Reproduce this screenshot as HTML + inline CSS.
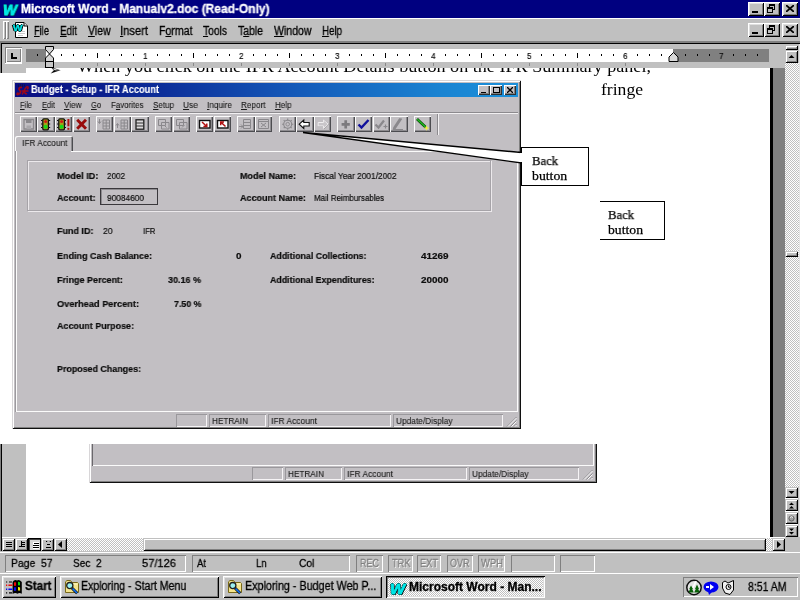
<!DOCTYPE html>
<html lang="en"><head><meta charset="utf-8"><title>Microsoft Word - Manualv2.doc (Read-Only)</title>
<style>
html,body{margin:0;padding:0;background:#c0c0c0;overflow:hidden}
#s{position:relative;width:800px;height:600px;overflow:hidden;background:#c0c0c0}
#s div,#s span,#s svg{position:absolute;display:block}
#s span{white-space:nowrap;transform-origin:0 0;will-change:transform}
#s u{text-decoration:underline;text-underline-offset:1px}
.dith{background-image:repeating-conic-gradient(#fff 0 25%,#c0c0c0 0 50%);background-size:2px 2px}
</style></head><body><div id="s">
<div style="left:0px;top:0px;width:800px;height:18px;background:#000080;"></div>
<span id="t0" style="left:3px;top:2.18px;font:italic bold 15.5px/15.5px 'Liberation Sans',sans-serif;color:#00e8e8;transform:scaleX(0.9562);-webkit-text-stroke:0.3px #00e8e8;-webkit-text-stroke:0.9px #00e8e8;text-shadow:1px 0 0 #003030,0 1px 0 #003030,-1px 0 0 #003030,0 -1px 0 #003030,1px 1px 0 #002020;">W</span>
<span id="t1" style="left:21px;top:2.84px;font:bold 12px/12px 'Liberation Sans',sans-serif;color:#fff;transform:scaleX(0.9974);-webkit-text-stroke:0.3px #fff;">Microsoft Word - Manualv2.doc (Read-Only)</span>
<div style="left:748px;top:2px;width:16px;height:14px;background:#c0c0c0;box-shadow:inset 1px 1px 0 #fff,inset -1px -1px 0 #000,inset 2px 2px 0 #dfdfdf,inset -2px -2px 0 #808080;"></div>
<div style="left:752px;top:11px;width:6px;height:2px;background:#000;"></div>
<div style="left:764px;top:2px;width:16px;height:14px;background:#c0c0c0;box-shadow:inset 1px 1px 0 #fff,inset -1px -1px 0 #000,inset 2px 2px 0 #dfdfdf,inset -2px -2px 0 #808080;"></div>
<div style="left:769px;top:4px;width:6px;height:6px;background:transparent;border:1px solid #000;border-top-width:2px;box-sizing:border-box;"></div>
<div style="left:767px;top:7px;width:6px;height:6px;background:#c0c0c0;border:1px solid #000;border-top-width:2px;box-sizing:border-box;"></div>
<div style="left:782px;top:2px;width:16px;height:14px;background:#c0c0c0;box-shadow:inset 1px 1px 0 #fff,inset -1px -1px 0 #000,inset 2px 2px 0 #dfdfdf,inset -2px -2px 0 #808080;"></div>
<svg style="left:786px;top:5px;" width="8" height="7" viewBox="0 0 8 7"><path d="M0 0L8 7M8 0L0 7" stroke="#000" stroke-width="1.7" fill="none"/></svg>
<div style="left:0px;top:18px;width:800px;height:1px;background:#fff;"></div>
<div style="left:0px;top:19px;width:800px;height:22px;background:#c0c0c0;"></div>
<div style="left:3px;top:21px;width:2px;height:18px;background:#c0c0c0;box-shadow:inset 1px 1px 0 #fff,inset -1px -1px 0 #808080;width:3px"></div>
<div style="left:6px;top:21px;width:2px;height:18px;background:#c0c0c0;box-shadow:inset 1px 1px 0 #fff,inset -1px -1px 0 #808080;width:3px"></div>
<svg style="left:11px;top:21px;" width="18" height="18" viewBox="0 0 18 18"><path d="M4.5 1.5H13L16.5 5V16.5H4.5Z" fill="#fff" stroke="#000"/><path d="M13 1.5V5H16.5" fill="#e0e0e0" stroke="#000"/><path d="M7 10.5H14M7 12.5H14M7 14.5H12" stroke="#c8c8c8"/></svg>
<span id="t2" style="left:12.5px;top:23.60px;font:bold 8.5px/8.5px 'Liberation Sans',sans-serif;color:#00e8e8;transform:scaleX(1.1829);-webkit-text-stroke:0.3px #00e8e8;text-shadow:1px 0 0 #000,0 1px 0 #000,-1px 0 0 #000,0 -1px 0 #000;">W</span>
<span id="t3" style="left:34px;top:25.44px;font:normal 12px/12px 'Liberation Sans',sans-serif;color:#000;transform:scaleX(0.7748);-webkit-text-stroke:0.3px #000;"><u>F</u>ile</span>
<span id="t4" style="left:59.5px;top:25.44px;font:normal 12px/12px 'Liberation Sans',sans-serif;color:#000;transform:scaleX(0.8211);-webkit-text-stroke:0.3px #000;"><u>E</u>dit</span>
<span id="t5" style="left:87.5px;top:25.44px;font:normal 12px/12px 'Liberation Sans',sans-serif;color:#000;transform:scaleX(0.8717);-webkit-text-stroke:0.3px #000;"><u>V</u>iew</span>
<span id="t6" style="left:120px;top:25.44px;font:normal 12px/12px 'Liberation Sans',sans-serif;color:#000;transform:scaleX(0.9324);-webkit-text-stroke:0.3px #000;"><u>I</u>nsert</span>
<span id="t7" style="left:158.5px;top:25.44px;font:normal 12px/12px 'Liberation Sans',sans-serif;color:#000;transform:scaleX(0.8809);-webkit-text-stroke:0.3px #000;">F<u>o</u>rmat</span>
<span id="t8" style="left:203px;top:25.44px;font:normal 12px/12px 'Liberation Sans',sans-serif;color:#000;transform:scaleX(0.8567);-webkit-text-stroke:0.3px #000;"><u>T</u>ools</span>
<span id="t9" style="left:238px;top:25.44px;font:normal 12px/12px 'Liberation Sans',sans-serif;color:#000;transform:scaleX(0.8710);-webkit-text-stroke:0.3px #000;">T<u>a</u>ble</span>
<span id="t10" style="left:273.5px;top:25.44px;font:normal 12px/12px 'Liberation Sans',sans-serif;color:#000;transform:scaleX(0.8785);-webkit-text-stroke:0.3px #000;"><u>W</u>indow</span>
<span id="t11" style="left:322px;top:25.44px;font:normal 12px/12px 'Liberation Sans',sans-serif;color:#000;transform:scaleX(0.8101);-webkit-text-stroke:0.3px #000;"><u>H</u>elp</span>
<div style="left:748px;top:23px;width:16px;height:14px;background:#c0c0c0;box-shadow:inset 1px 1px 0 #fff,inset -1px -1px 0 #000,inset 2px 2px 0 #dfdfdf,inset -2px -2px 0 #808080;"></div>
<div style="left:752px;top:32px;width:6px;height:2px;background:#000;"></div>
<div style="left:764px;top:23px;width:16px;height:14px;background:#c0c0c0;box-shadow:inset 1px 1px 0 #fff,inset -1px -1px 0 #000,inset 2px 2px 0 #dfdfdf,inset -2px -2px 0 #808080;"></div>
<div style="left:769px;top:25px;width:6px;height:6px;background:transparent;border:1px solid #000;border-top-width:2px;box-sizing:border-box;"></div>
<div style="left:767px;top:28px;width:6px;height:6px;background:#c0c0c0;border:1px solid #000;border-top-width:2px;box-sizing:border-box;"></div>
<div style="left:782px;top:23px;width:16px;height:14px;background:#c0c0c0;box-shadow:inset 1px 1px 0 #fff,inset -1px -1px 0 #000,inset 2px 2px 0 #dfdfdf,inset -2px -2px 0 #808080;"></div>
<svg style="left:786px;top:26px;" width="8" height="7" viewBox="0 0 8 7"><path d="M0 0L8 7M8 0L0 7" stroke="#000" stroke-width="1.7" fill="none"/></svg>
<div style="left:0px;top:41px;width:800px;height:2px;background:#808080;"></div>
<div style="left:0px;top:43px;width:800px;height:1px;background:#000;"></div>
<div style="left:0px;top:43px;width:1px;height:508px;background:#808080;"></div>
<div style="left:1px;top:44px;width:1px;height:507px;background:#000;"></div>
<div style="left:2px;top:44px;width:783px;height:24px;background:#c0c0c0;"></div>
<div style="left:5px;top:47px;width:17px;height:16px;background:#c0c0c0;box-shadow:inset 1px 1px 0 #808080,inset -1px -1px 0 #fff,inset 2px 2px 0 #fff,inset -2px -2px 0 #808080;"></div>
<div style="left:5px;top:63px;width:17px;height:1px;background:#fff;"></div>
<div style="left:11px;top:53px;width:2px;height:6px;background:#000;"></div>
<div style="left:11px;top:57px;width:6px;height:2px;background:#000;"></div>
<div style="left:26px;top:49px;width:20px;height:13px;background:#808080;"></div>
<div style="left:46px;top:49px;width:627px;height:13px;background:#fff;"></div>
<div style="left:673px;top:49px;width:96px;height:13px;background:#808080;"></div>
<div style="left:37px;top:54px;width:1px;height:2px;background:#000;"></div>
<div style="left:61px;top:54px;width:1px;height:2px;background:#000;"></div>
<div style="left:73px;top:54px;width:1px;height:2px;background:#000;"></div>
<div style="left:85px;top:54px;width:1px;height:2px;background:#000;"></div>
<div style="left:97px;top:53px;width:1px;height:5px;background:#000;"></div>
<div style="left:109px;top:54px;width:1px;height:2px;background:#000;"></div>
<div style="left:121px;top:54px;width:1px;height:2px;background:#000;"></div>
<div style="left:133px;top:54px;width:1px;height:2px;background:#000;"></div>
<span id="t12" style="left:142.7px;top:50.70px;font:normal 9.8px/9.8px 'Liberation Sans',sans-serif;color:#000;transform:scaleX(0.8436);-webkit-text-stroke:0.15px #000;">1</span>
<div style="left:157px;top:54px;width:1px;height:2px;background:#000;"></div>
<div style="left:169px;top:54px;width:1px;height:2px;background:#000;"></div>
<div style="left:181px;top:54px;width:1px;height:2px;background:#000;"></div>
<div style="left:193px;top:53px;width:1px;height:5px;background:#000;"></div>
<div style="left:205px;top:54px;width:1px;height:2px;background:#000;"></div>
<div style="left:217px;top:54px;width:1px;height:2px;background:#000;"></div>
<div style="left:229px;top:54px;width:1px;height:2px;background:#000;"></div>
<span id="t13" style="left:238.7px;top:50.70px;font:normal 9.8px/9.8px 'Liberation Sans',sans-serif;color:#000;transform:scaleX(0.8436);-webkit-text-stroke:0.15px #000;">2</span>
<div style="left:253px;top:54px;width:1px;height:2px;background:#000;"></div>
<div style="left:265px;top:54px;width:1px;height:2px;background:#000;"></div>
<div style="left:277px;top:54px;width:1px;height:2px;background:#000;"></div>
<div style="left:289px;top:53px;width:1px;height:5px;background:#000;"></div>
<div style="left:301px;top:54px;width:1px;height:2px;background:#000;"></div>
<div style="left:313px;top:54px;width:1px;height:2px;background:#000;"></div>
<div style="left:325px;top:54px;width:1px;height:2px;background:#000;"></div>
<span id="t14" style="left:334.7px;top:50.70px;font:normal 9.8px/9.8px 'Liberation Sans',sans-serif;color:#000;transform:scaleX(0.8436);-webkit-text-stroke:0.15px #000;">3</span>
<div style="left:349px;top:54px;width:1px;height:2px;background:#000;"></div>
<div style="left:361px;top:54px;width:1px;height:2px;background:#000;"></div>
<div style="left:373px;top:54px;width:1px;height:2px;background:#000;"></div>
<div style="left:385px;top:53px;width:1px;height:5px;background:#000;"></div>
<div style="left:397px;top:54px;width:1px;height:2px;background:#000;"></div>
<div style="left:409px;top:54px;width:1px;height:2px;background:#000;"></div>
<div style="left:421px;top:54px;width:1px;height:2px;background:#000;"></div>
<span id="t15" style="left:430.7px;top:50.70px;font:normal 9.8px/9.8px 'Liberation Sans',sans-serif;color:#000;transform:scaleX(0.8436);-webkit-text-stroke:0.15px #000;">4</span>
<div style="left:445px;top:54px;width:1px;height:2px;background:#000;"></div>
<div style="left:457px;top:54px;width:1px;height:2px;background:#000;"></div>
<div style="left:469px;top:54px;width:1px;height:2px;background:#000;"></div>
<div style="left:481px;top:53px;width:1px;height:5px;background:#000;"></div>
<div style="left:493px;top:54px;width:1px;height:2px;background:#000;"></div>
<div style="left:505px;top:54px;width:1px;height:2px;background:#000;"></div>
<div style="left:517px;top:54px;width:1px;height:2px;background:#000;"></div>
<span id="t16" style="left:526.7px;top:50.70px;font:normal 9.8px/9.8px 'Liberation Sans',sans-serif;color:#000;transform:scaleX(0.8436);-webkit-text-stroke:0.15px #000;">5</span>
<div style="left:541px;top:54px;width:1px;height:2px;background:#000;"></div>
<div style="left:553px;top:54px;width:1px;height:2px;background:#000;"></div>
<div style="left:565px;top:54px;width:1px;height:2px;background:#000;"></div>
<div style="left:577px;top:53px;width:1px;height:5px;background:#000;"></div>
<div style="left:589px;top:54px;width:1px;height:2px;background:#000;"></div>
<div style="left:601px;top:54px;width:1px;height:2px;background:#000;"></div>
<div style="left:613px;top:54px;width:1px;height:2px;background:#000;"></div>
<span id="t17" style="left:622.7px;top:50.70px;font:normal 9.8px/9.8px 'Liberation Sans',sans-serif;color:#000;transform:scaleX(0.8436);-webkit-text-stroke:0.15px #000;">6</span>
<div style="left:637px;top:54px;width:1px;height:2px;background:#000;"></div>
<div style="left:649px;top:54px;width:1px;height:2px;background:#000;"></div>
<div style="left:661px;top:54px;width:1px;height:2px;background:#000;"></div>
<div style="left:673px;top:53px;width:1px;height:5px;background:#000;"></div>
<div style="left:685px;top:54px;width:1px;height:2px;background:#000;"></div>
<div style="left:697px;top:54px;width:1px;height:2px;background:#000;"></div>
<div style="left:709px;top:54px;width:1px;height:2px;background:#000;"></div>
<span id="t18" style="left:718.7px;top:50.70px;font:normal 9.8px/9.8px 'Liberation Sans',sans-serif;color:#000;transform:scaleX(0.8436);-webkit-text-stroke:0.15px #000;">7</span>
<div style="left:733px;top:54px;width:1px;height:2px;background:#000;"></div>
<div style="left:745px;top:54px;width:1px;height:2px;background:#000;"></div>
<div style="left:757px;top:54px;width:1px;height:2px;background:#000;"></div>
<div style="left:97px;top:63px;width:1px;height:3px;background:#8a8a8a;"></div>
<div style="left:145px;top:63px;width:1px;height:3px;background:#8a8a8a;"></div>
<div style="left:193px;top:63px;width:1px;height:3px;background:#8a8a8a;"></div>
<div style="left:241px;top:63px;width:1px;height:3px;background:#8a8a8a;"></div>
<div style="left:289px;top:63px;width:1px;height:3px;background:#8a8a8a;"></div>
<div style="left:337px;top:63px;width:1px;height:3px;background:#8a8a8a;"></div>
<div style="left:385px;top:63px;width:1px;height:3px;background:#8a8a8a;"></div>
<div style="left:433px;top:63px;width:1px;height:3px;background:#8a8a8a;"></div>
<div style="left:481px;top:63px;width:1px;height:3px;background:#8a8a8a;"></div>
<div style="left:529px;top:63px;width:1px;height:3px;background:#8a8a8a;"></div>
<div style="left:577px;top:63px;width:1px;height:3px;background:#8a8a8a;"></div>
<div style="left:625px;top:63px;width:1px;height:3px;background:#8a8a8a;"></div>
<svg style="left:44px;top:45px;" width="12" height="24" viewBox="0 0 12 24"><path d="M1.5 1.5H9.5V4.5L5.5 9L1.5 4.5Z" fill="#d4d4d4" stroke="#000"/><path d="M1.5 16.5V13L5.5 9L9.5 13V16.5Z" fill="#d4d4d4" stroke="#000"/><rect x="1.5" y="16.5" width="8" height="6" fill="#c8c8c8" stroke="#000"/></svg>
<svg style="left:667px;top:51px;" width="12" height="12" viewBox="0 0 12 12"><path d="M2 10.5V6L6.5 1.5L11 6V10.5Z" fill="#d8d8d8" stroke="#000"/></svg>
<div style="left:2px;top:68px;width:24px;height:469px;background:#c0c0c0;"></div>
<div style="left:26px;top:68px;width:744px;height:469px;background:#fff;"></div>
<div style="left:770px;top:68px;width:3px;height:469px;background:#000;"></div>
<div style="left:773px;top:68px;width:12px;height:469px;background:#808080;"></div>
<div style="left:26px;top:68px;width:744px;height:40px;overflow:hidden">
<span id="t19" style="left:23px;top:-5.20px;font:bold 15px/15px 'Liberation Sans',sans-serif;color:#000;transform:scaleX(0.9540);font-family:'DejaVu Sans',sans-serif;">➢</span>
<span id="t20" style="left:51px;top:-9.56px;font:normal 17.5px/17.5px 'Liberation Serif',serif;color:#000;transform:scaleX(1.0359);">When you click on the IFR Account Details button on the IFR Summary panel,</span>
<span id="t21" style="left:575px;top:12.64px;font:normal 17.5px/17.5px 'Liberation Serif',serif;color:#000;transform:scaleX(1.0049);">fringe</span>
</div>
<div style="left:0px;top:73px;width:26px;height:371px;background:#fff;"></div>
<div style="left:12px;top:80px;width:509px;height:349px;background:#c2bfc3;box-shadow:inset 1px 1px 0 #d8d6d8,inset -1px -1px 0 #101010,inset 2px 2px 0 #fff,inset -2px -2px 0 #808080;"></div>
<div style="left:15px;top:83px;width:503px;height:14px;background:linear-gradient(90deg,#0a0e84 0%,#0a1888 12%,#0c2c98 28%,#1458b8 55%,#1a84d2 85%,#1c90da 100%);"></div>
<svg style="left:16px;top:83px;" width="14" height="14" viewBox="0 0 14 14"><path d="M2.5 1.5V4M4.5 1V4M6.5 1.2V4M8.5 1.5V3.5" stroke="#10104a" stroke-width="1.1"/><path d="M6 4.5C3.5 4 2 5.5 3.5 7C5 8.5 5 10.5 2 11.5C0.5 11.8 0.8 10 2.5 10.2" stroke="#9c0818" stroke-width="1.7" fill="none"/><path d="M6 11.5C8 9 8.5 5.5 10.5 4C12.5 3 12.8 5 11 6.2M5.5 8H12.5M9 8C8.5 10 9 11.5 11 10.5" stroke="#9c0818" stroke-width="1.5" fill="none"/></svg>
<span id="t22" style="left:30.5px;top:84.57px;font:bold 10.2px/10.2px 'Liberation Sans',sans-serif;color:#fff;transform:scaleX(0.9071);-webkit-text-stroke:0.12px #fff;">Budget - Setup - IFR Account</span>
<div style="left:478px;top:85px;width:12px;height:10px;background:#c2bfc3;box-shadow:inset 1px 1px 0 #fff,inset -1px -1px 0 #303030,inset -2px -2px 0 #808080;"></div>
<div style="left:481px;top:91.5px;width:5px;height:1.6px;background:#000;"></div>
<div style="left:490px;top:85px;width:12px;height:10px;background:#c2bfc3;box-shadow:inset 1px 1px 0 #fff,inset -1px -1px 0 #303030,inset -2px -2px 0 #808080;"></div>
<div style="left:492.5px;top:86.8px;width:7px;height:6.4px;background:transparent;border:1px solid #000;border-top-width:1.6px;box-sizing:border-box;"></div>
<div style="left:503.5px;top:85px;width:12px;height:10px;background:#c2bfc3;box-shadow:inset 1px 1px 0 #fff,inset -1px -1px 0 #303030,inset -2px -2px 0 #808080;"></div>
<svg style="left:506.5px;top:87px;" width="6" height="6" viewBox="0 0 6 6"><path d="M0 0L6 6M6 0L0 6" stroke="#000" stroke-width="1.3" fill="none"/></svg>
<span id="t23" style="left:19.5px;top:99.60px;font:normal 9.8px/9.8px 'Liberation Sans',sans-serif;color:#1c1c1c;transform:scaleX(0.7596);-webkit-text-stroke:0.12px #1c1c1c;"><u>F</u>ile</span>
<span id="t24" style="left:41.5px;top:99.60px;font:normal 9.8px/9.8px 'Liberation Sans',sans-serif;color:#1c1c1c;transform:scaleX(0.7689);-webkit-text-stroke:0.12px #1c1c1c;"><u>E</u>dit</span>
<span id="t25" style="left:64px;top:99.60px;font:normal 9.8px/9.8px 'Liberation Sans',sans-serif;color:#1c1c1c;transform:scaleX(0.8309);-webkit-text-stroke:0.12px #1c1c1c;"><u>V</u>iew</span>
<span id="t26" style="left:91px;top:99.60px;font:normal 9.8px/9.8px 'Liberation Sans',sans-serif;color:#1c1c1c;transform:scaleX(0.7646);-webkit-text-stroke:0.12px #1c1c1c;"><u>G</u>o</span>
<span id="t27" style="left:111px;top:99.60px;font:normal 9.8px/9.8px 'Liberation Sans',sans-serif;color:#1c1c1c;transform:scaleX(0.8065);-webkit-text-stroke:0.12px #1c1c1c;">F<u>a</u>vorites</span>
<span id="t28" style="left:152.5px;top:99.60px;font:normal 9.8px/9.8px 'Liberation Sans',sans-serif;color:#1c1c1c;transform:scaleX(0.8195);-webkit-text-stroke:0.12px #1c1c1c;"><u>S</u>etup</span>
<span id="t29" style="left:183px;top:99.60px;font:normal 9.8px/9.8px 'Liberation Sans',sans-serif;color:#1c1c1c;transform:scaleX(0.8602);-webkit-text-stroke:0.12px #1c1c1c;"><u>U</u>se</span>
<span id="t30" style="left:207px;top:99.60px;font:normal 9.8px/9.8px 'Liberation Sans',sans-serif;color:#1c1c1c;transform:scaleX(0.8342);-webkit-text-stroke:0.12px #1c1c1c;"><u>I</u>nquire</span>
<span id="t31" style="left:240.5px;top:99.60px;font:normal 9.8px/9.8px 'Liberation Sans',sans-serif;color:#1c1c1c;transform:scaleX(0.8327);-webkit-text-stroke:0.12px #1c1c1c;"><u>R</u>eport</span>
<span id="t32" style="left:274.5px;top:99.60px;font:normal 9.8px/9.8px 'Liberation Sans',sans-serif;color:#1c1c1c;transform:scaleX(0.8186);-webkit-text-stroke:0.12px #1c1c1c;"><u>H</u>elp</span>
<div style="left:15px;top:112px;width:503px;height:1px;background:#8c8a8e;"></div>
<div style="left:15px;top:113px;width:503px;height:1px;background:#f2f0f2;"></div>
<div style="left:19.5px;top:115.6px;width:17.5px;height:16.5px;background:#c2bfc3;box-shadow:inset 1px 1px 0 #fbfbfb,inset -1px -1px 0 #4c4c50,inset -2px -2px 0 #8e8c90;"></div>
<div style="left:37.2px;top:115.6px;width:17.5px;height:16.5px;background:#c2bfc3;box-shadow:inset 1px 1px 0 #fbfbfb,inset -1px -1px 0 #4c4c50,inset -2px -2px 0 #8e8c90;"></div>
<div style="left:54.9px;top:115.6px;width:17.5px;height:16.5px;background:#c2bfc3;box-shadow:inset 1px 1px 0 #fbfbfb,inset -1px -1px 0 #4c4c50,inset -2px -2px 0 #8e8c90;"></div>
<div style="left:72.6px;top:115.6px;width:17.5px;height:16.5px;background:#c2bfc3;box-shadow:inset 1px 1px 0 #fbfbfb,inset -1px -1px 0 #4c4c50,inset -2px -2px 0 #8e8c90;"></div>
<div style="left:95.8px;top:115.6px;width:17.5px;height:16.5px;background:#c2bfc3;box-shadow:inset 1px 1px 0 #fbfbfb,inset -1px -1px 0 #4c4c50,inset -2px -2px 0 #8e8c90;"></div>
<div style="left:113.5px;top:115.6px;width:17.5px;height:16.5px;background:#c2bfc3;box-shadow:inset 1px 1px 0 #fbfbfb,inset -1px -1px 0 #4c4c50,inset -2px -2px 0 #8e8c90;"></div>
<div style="left:131.2px;top:115.6px;width:17.5px;height:16.5px;background:#c2bfc3;box-shadow:inset 1px 1px 0 #fbfbfb,inset -1px -1px 0 #4c4c50,inset -2px -2px 0 #8e8c90;"></div>
<div style="left:154.8px;top:115.6px;width:17.5px;height:16.5px;background:#c2bfc3;box-shadow:inset 1px 1px 0 #fbfbfb,inset -1px -1px 0 #4c4c50,inset -2px -2px 0 #8e8c90;"></div>
<div style="left:172.5px;top:115.6px;width:17.5px;height:16.5px;background:#c2bfc3;box-shadow:inset 1px 1px 0 #fbfbfb,inset -1px -1px 0 #4c4c50,inset -2px -2px 0 #8e8c90;"></div>
<div style="left:195.8px;top:115.6px;width:17.5px;height:16.5px;background:#c2bfc3;box-shadow:inset 1px 1px 0 #fbfbfb,inset -1px -1px 0 #4c4c50,inset -2px -2px 0 #8e8c90;"></div>
<div style="left:213.5px;top:115.6px;width:17.5px;height:16.5px;background:#c2bfc3;box-shadow:inset 1px 1px 0 #fbfbfb,inset -1px -1px 0 #4c4c50,inset -2px -2px 0 #8e8c90;"></div>
<div style="left:237px;top:115.6px;width:17.5px;height:16.5px;background:#c2bfc3;box-shadow:inset 1px 1px 0 #fbfbfb,inset -1px -1px 0 #4c4c50,inset -2px -2px 0 #8e8c90;"></div>
<div style="left:254.8px;top:115.6px;width:17.5px;height:16.5px;background:#c2bfc3;box-shadow:inset 1px 1px 0 #fbfbfb,inset -1px -1px 0 #4c4c50,inset -2px -2px 0 #8e8c90;"></div>
<div style="left:278.5px;top:115.6px;width:17.5px;height:16.5px;background:#c2bfc3;box-shadow:inset 1px 1px 0 #fbfbfb,inset -1px -1px 0 #4c4c50,inset -2px -2px 0 #8e8c90;"></div>
<div style="left:296px;top:115.6px;width:17.5px;height:16.5px;background:#c2bfc3;box-shadow:inset 1px 1px 0 #fbfbfb,inset -1px -1px 0 #4c4c50,inset -2px -2px 0 #8e8c90;"></div>
<div style="left:313.6px;top:115.6px;width:17.5px;height:16.5px;background:#c2bfc3;box-shadow:inset 1px 1px 0 #fbfbfb,inset -1px -1px 0 #4c4c50,inset -2px -2px 0 #8e8c90;"></div>
<div style="left:337.2px;top:115.6px;width:17.5px;height:16.5px;background:#c2bfc3;box-shadow:inset 1px 1px 0 #fbfbfb,inset -1px -1px 0 #4c4c50,inset -2px -2px 0 #8e8c90;"></div>
<div style="left:354.8px;top:115.6px;width:17.5px;height:16.5px;background:#c2bfc3;box-shadow:inset 1px 1px 0 #fbfbfb,inset -1px -1px 0 #4c4c50,inset -2px -2px 0 #8e8c90;"></div>
<div style="left:372.5px;top:115.6px;width:17.5px;height:16.5px;background:#c2bfc3;box-shadow:inset 1px 1px 0 #fbfbfb,inset -1px -1px 0 #4c4c50,inset -2px -2px 0 #8e8c90;"></div>
<div style="left:390px;top:115.6px;width:17.5px;height:16.5px;background:#c2bfc3;box-shadow:inset 1px 1px 0 #fbfbfb,inset -1px -1px 0 #4c4c50,inset -2px -2px 0 #8e8c90;"></div>
<div style="left:413.6px;top:115.6px;width:17.5px;height:16.5px;background:#c2bfc3;box-shadow:inset 1px 1px 0 #fbfbfb,inset -1px -1px 0 #4c4c50,inset -2px -2px 0 #8e8c90;"></div>
<div style="left:436.5px;top:114px;width:1px;height:21px;background:#8c8a8e;"></div>
<div style="left:437.5px;top:114px;width:1px;height:21px;background:#f2f0f2;"></div>
<svg style="left:19.5px;top:115.6px;" width="17.5" height="16.5" viewBox="0 0 17.5 16.5"><path d="M4 3.5H13.5V13H4Z" fill="none" stroke="#8a888c" stroke-width="1.3"/><rect x="6" y="3.5" width="5.5" height="3.5" fill="#8a888c"/><rect x="6.5" y="9.5" width="4.5" height="3.5" fill="#a8a6aa"/></svg>
<svg style="left:37.2px;top:115.6px;" width="17.5" height="16.5" viewBox="0 0 17.5 16.5"><rect x="5.8" y="2.8" width="5.6" height="11" rx="1" fill="#a8a018" stroke="#101010" stroke-width="1.3"/><circle cx="8.6" cy="5.6" r="1.5" fill="#d01818"/><circle cx="8.6" cy="10.8" r="2" fill="#18d818"/><path d="M4 4.5H5.5M4 8H5.5M4 11.5H5.5M11.7 4.5H13.2M11.7 8H13.2M11.7 11.5H13.2" stroke="#101010"/></svg>
<svg style="left:54.9px;top:115.6px;" width="17.5" height="16.5" viewBox="0 0 17.5 16.5"><rect x="3.8" y="2.8" width="5.6" height="11" rx="1" fill="#a8a018" stroke="#101010" stroke-width="1.3"/><circle cx="6.6" cy="5.6" r="1.5" fill="#d01818"/><circle cx="6.6" cy="10.8" r="2" fill="#18d818"/><path d="M2 4.5H3.5M2 8H3.5M2 11.5H3.5M9.7 4.5H11M9.7 8H11M9.7 11.5H11" stroke="#101010"/><path d="M13.4 3V10.3" stroke="#b01010" stroke-width="2"/><rect x="12.4" y="11.8" width="2" height="2" fill="#b01010"/></svg>
<svg style="left:72.6px;top:115.6px;" width="17.5" height="16.5" viewBox="0 0 17.5 16.5"><path d="M4.2 3.8L13 12.8M13 3.8L4.2 12.8" stroke="#980c0c" stroke-width="2.9" fill="none"/></svg>
<svg style="left:95.8px;top:115.6px;" width="17.5" height="16.5" viewBox="0 0 17.5 16.5"><path d="M7 4H13.5V13H7ZM7 7H13.5M7 10H13.5M10.2 4V13" fill="none" stroke="#8a888c"/><path d="M3.5 3V7M2 5.5L3.5 7.5L5 5.5" stroke="#8a888c" fill="none"/></svg>
<svg style="left:113.5px;top:115.6px;" width="17.5" height="16.5" viewBox="0 0 17.5 16.5"><path d="M7 4H13.5V13H7ZM7 7H13.5M7 10H13.5M10.2 4V13" fill="none" stroke="#8a888c"/><path d="M3.5 12V8M2 9.5L3.5 7.5L5 9.5" stroke="#8a888c" fill="none"/></svg>
<svg style="left:131.2px;top:115.6px;" width="17.5" height="16.5" viewBox="0 0 17.5 16.5"><rect x="5" y="3.8" width="7.8" height="9.4" fill="#dcdadc" stroke="#202020" stroke-width="1.3"/><path d="M5 7H12.8M5 10H12.8" stroke="#303030" stroke-width="1.1"/></svg>
<svg style="left:154.8px;top:115.6px;" width="17.5" height="16.5" viewBox="0 0 17.5 16.5"><path d="M3.5 3.5H10.5V9.5H3.5Z M6.5 6.5H14V13H6.5Z" fill="none" stroke="#8a888c"/><path d="M9 9L11.5 11.5" stroke="#8a888c"/></svg>
<svg style="left:172.5px;top:115.6px;" width="17.5" height="16.5" viewBox="0 0 17.5 16.5"><path d="M3.5 3.5H10.5V9.5H3.5Z M6.5 6.5H14V13H6.5Z" fill="none" stroke="#8a888c"/><path d="M11.5 9L9 11.5" stroke="#8a888c"/></svg>
<svg style="left:195.8px;top:115.6px;" width="17.5" height="16.5" viewBox="0 0 17.5 16.5"><rect x="3.5" y="4.5" width="10.5" height="7.5" fill="#fff" stroke="#101010" stroke-width="1.4"/><path d="M6 6L10.5 10.2M10.8 7.4V10.6H7.4" stroke="#b01010" stroke-width="1.5" fill="none"/></svg>
<svg style="left:213.5px;top:115.6px;" width="17.5" height="16.5" viewBox="0 0 17.5 16.5"><rect x="3.5" y="4.5" width="10.5" height="7.5" fill="#fff" stroke="#101010" stroke-width="1.4"/><path d="M11.5 10.5L7 6.3M6.7 9.2V6H10" stroke="#b01010" stroke-width="1.5" fill="none"/></svg>
<svg style="left:237px;top:115.6px;" width="17.5" height="16.5" viewBox="0 0 17.5 16.5"><path d="M6.5 3.5H13.5V12.5H6.5ZM6.5 6.5H13.5M6.5 9.5H13.5" fill="none" stroke="#8a888c"/><path d="M2 10.5H6M4 8.5L6 10.5L4 12.5" stroke="#8a888c" fill="none"/></svg>
<svg style="left:254.8px;top:115.6px;" width="17.5" height="16.5" viewBox="0 0 17.5 16.5"><path d="M3.5 3.5H13.5V12.5H3.5ZM3.5 5.5H13.5" fill="none" stroke="#8a888c"/><path d="M6 7L11 11M11 7L6 11" stroke="#8a888c"/></svg>
<svg style="left:278.5px;top:115.6px;" width="17.5" height="16.5" viewBox="0 0 17.5 16.5"><circle cx="8.7" cy="8.2" r="4" fill="none" stroke="#8a888c" stroke-width="1.1"/><circle cx="8.7" cy="8.2" r="1.8" fill="none" stroke="#8a888c" stroke-width="0.9"/><path d="M8.7 2.6V4.2M8.7 12.2V13.8M3.1 8.2H4.7M12.7 8.2H14.3M4.7 4.2L5.9 5.4M11.5 11L12.7 12.2M12.7 4.2L11.5 5.4M5.9 11L4.7 12.2" stroke="#8a888c" stroke-width="1.1"/></svg>
<svg style="left:296px;top:115.6px;" width="17.5" height="16.5" viewBox="0 0 17.5 16.5"><path d="M3.2 8.2L7.8 4V6.5H13.2V10H7.8V12.5Z" fill="#fff" stroke="#101010" stroke-width="1.1"/></svg>
<svg style="left:313.6px;top:115.6px;" width="17.5" height="16.5" viewBox="0 0 17.5 16.5"><path d="M14.6 8.4L10 4.2V6.7H4.6V10.2H10V12.7Z" fill="none" stroke="#8a888c" stroke-width="1"/><path d="M14.2 8.2L9.6 4V6.5H4.2V10H9.6V12.5Z" fill="#c8c5c9" stroke="#f0eef0" stroke-width="1"/></svg>
<svg style="left:337.2px;top:115.6px;" width="17.5" height="16.5" viewBox="0 0 17.5 16.5"><path d="M8.7 4.2V12.4M4.6 8.3H12.8" stroke="#7c7a7e" stroke-width="2.7"/></svg>
<svg style="left:354.8px;top:115.6px;" width="17.5" height="16.5" viewBox="0 0 17.5 16.5"><path d="M3.5 8.5L6.5 11.5L13.5 4" stroke="#10109c" stroke-width="2.4" fill="none"/></svg>
<svg style="left:372.5px;top:115.6px;" width="17.5" height="16.5" viewBox="0 0 17.5 16.5"><path d="M2.5 8.5L5.5 11.5L11 4.5" stroke="#8a888c" stroke-width="2.2" fill="none"/><path d="M12.5 8.5V12.5M10.5 10.5H14.5" stroke="#8a888c" stroke-width="1.2"/></svg>
<svg style="left:390px;top:115.6px;" width="17.5" height="16.5" viewBox="0 0 17.5 16.5"><path d="M11.5 2.5L5 12.5L3.5 13.5L4 11.5L10 2.5" stroke="#8a888c" stroke-width="1.6" fill="none"/><path d="M3.5 13.5H13" stroke="#8a888c"/></svg>
<svg style="left:413.6px;top:115.6px;" width="17.5" height="16.5" viewBox="0 0 17.5 16.5"><path d="M3 3L12 11.5" stroke="#084808" stroke-width="2.8"/><path d="M3.3 3.3L11.5 11" stroke="#20c020" stroke-width="1.3"/><path d="M12.5 9L13.2 11.3L15.5 12L13.2 12.8L12.5 15L11.8 12.8L9.5 12L11.8 11.3Z" fill="#f0f040"/></svg>
<div style="left:15px;top:135.5px;width:57.5px;height:17.5px;background:#c2bfc3;box-shadow:inset 1px 1px 0 #fbfbfb,inset -1px 0 0 #4c4c50,inset -2px 0 0 #8e8c90;border-radius:2px 2px 0 0;"></div>
<div style="left:14.5px;top:151px;width:1px;height:261px;background:#9c9a9e;"></div>
<div style="left:15.5px;top:151px;width:502.5px;height:261px;background:#c2bfc3;box-shadow:inset 1px 1px 0 #fbfbfb,inset -1px -1px 0 #fbfbfb;"></div>
<div style="left:16.5px;top:150px;width:54px;height:3px;background:#c2bfc3;"></div>
<span id="t33" style="left:21.5px;top:138.37px;font:normal 9.6px/9.6px 'Liberation Sans',sans-serif;color:#1c1c1c;transform:scaleX(0.8706);-webkit-text-stroke:0.12px #1c1c1c;">IFR Account</span>
<div style="left:26.5px;top:160px;width:464px;height:50.5px;background:transparent;box-sizing:border-box;border:1px solid #a6a3a8;box-shadow:1px 1px 0 #ece9ec,inset 1px 1px 0 #ece9ec;"></div>
<span id="t34" style="left:56.5px;top:171.19px;font:bold 9.7px/9.7px 'Liberation Sans',sans-serif;color:#0c0c0c;transform:scaleX(0.9520);-webkit-text-stroke:0.2px #0c0c0c;">Model ID:</span>
<span id="t35" style="left:106.5px;top:171.19px;font:normal 9.7px/9.7px 'Liberation Sans',sans-serif;color:#0c0c0c;transform:scaleX(0.8348);-webkit-text-stroke:0.2px #0c0c0c;">2002</span>
<span id="t36" style="left:56.5px;top:192.69px;font:bold 9.7px/9.7px 'Liberation Sans',sans-serif;color:#0c0c0c;transform:scaleX(0.9170);-webkit-text-stroke:0.2px #0c0c0c;">Account:</span>
<div style="left:100px;top:187.5px;width:57.5px;height:17px;background:#c2bfc3;box-sizing:border-box;border:1px solid #3a383c;box-shadow:inset 1px 1px 0 #8e8c90;"></div>
<span id="t37" style="left:106.5px;top:192.69px;font:normal 9.7px/9.7px 'Liberation Sans',sans-serif;color:#0c0c0c;transform:scaleX(0.8583);-webkit-text-stroke:0.2px #0c0c0c;">90084600</span>
<span id="t38" style="left:240px;top:171.19px;font:bold 9.7px/9.7px 'Liberation Sans',sans-serif;color:#0c0c0c;transform:scaleX(0.9287);-webkit-text-stroke:0.2px #0c0c0c;">Model Name:</span>
<span id="t39" style="left:314px;top:171.19px;font:normal 9.7px/9.7px 'Liberation Sans',sans-serif;color:#0c0c0c;transform:scaleX(0.8605);-webkit-text-stroke:0.2px #0c0c0c;">Fiscal Year 2001/2002</span>
<span id="t40" style="left:240px;top:192.69px;font:bold 9.7px/9.7px 'Liberation Sans',sans-serif;color:#0c0c0c;transform:scaleX(0.9288);-webkit-text-stroke:0.2px #0c0c0c;">Account Name:</span>
<span id="t41" style="left:314px;top:192.69px;font:normal 9.7px/9.7px 'Liberation Sans',sans-serif;color:#0c0c0c;transform:scaleX(0.8228);-webkit-text-stroke:0.2px #0c0c0c;">Mail Reimbursables</span>
<span id="t42" style="left:56.5px;top:226.19px;font:bold 9.7px/9.7px 'Liberation Sans',sans-serif;color:#0c0c0c;transform:scaleX(0.9292);-webkit-text-stroke:0.2px #0c0c0c;">Fund ID:</span>
<span id="t43" style="left:103px;top:226.19px;font:normal 9.7px/9.7px 'Liberation Sans',sans-serif;color:#0c0c0c;transform:scaleX(0.8812);-webkit-text-stroke:0.2px #0c0c0c;">20</span>
<span id="t44" style="left:143px;top:226.19px;font:normal 9.7px/9.7px 'Liberation Sans',sans-serif;color:#0c0c0c;transform:scaleX(0.8008);-webkit-text-stroke:0.2px #0c0c0c;">IFR</span>
<span id="t45" style="left:56.5px;top:250.69px;font:bold 9.7px/9.7px 'Liberation Sans',sans-serif;color:#0c0c0c;transform:scaleX(0.9288);-webkit-text-stroke:0.2px #0c0c0c;">Ending Cash Balance:</span>
<span id="t46" style="left:236px;top:250.69px;font:bold 9.7px/9.7px 'Liberation Sans',sans-serif;color:#0c0c0c;transform:scaleX(1.0203);-webkit-text-stroke:0.2px #0c0c0c;">0</span>
<span id="t47" style="left:270px;top:250.69px;font:bold 9.7px/9.7px 'Liberation Sans',sans-serif;color:#0c0c0c;transform:scaleX(0.9148);-webkit-text-stroke:0.2px #0c0c0c;">Additional Collections:</span>
<span id="t48" style="left:421px;top:250.69px;font:bold 9.7px/9.7px 'Liberation Sans',sans-serif;color:#0c0c0c;transform:scaleX(1.0203);-webkit-text-stroke:0.2px #0c0c0c;">41269</span>
<span id="t49" style="left:56.5px;top:275.19px;font:bold 9.7px/9.7px 'Liberation Sans',sans-serif;color:#0c0c0c;transform:scaleX(0.9288);-webkit-text-stroke:0.2px #0c0c0c;">Fringe Percent:</span>
<span id="t50" style="left:168px;top:275.19px;font:bold 9.7px/9.7px 'Liberation Sans',sans-serif;color:#0c0c0c;transform:scaleX(0.9279);-webkit-text-stroke:0.2px #0c0c0c;">30.16 %</span>
<span id="t51" style="left:270px;top:275.19px;font:bold 9.7px/9.7px 'Liberation Sans',sans-serif;color:#0c0c0c;transform:scaleX(0.9114);-webkit-text-stroke:0.2px #0c0c0c;">Additional Expenditures:</span>
<span id="t52" style="left:421px;top:275.19px;font:bold 9.7px/9.7px 'Liberation Sans',sans-serif;color:#0c0c0c;transform:scaleX(1.0203);-webkit-text-stroke:0.2px #0c0c0c;">20000</span>
<span id="t53" style="left:56.5px;top:299.19px;font:bold 9.7px/9.7px 'Liberation Sans',sans-serif;color:#0c0c0c;transform:scaleX(0.9518);-webkit-text-stroke:0.2px #0c0c0c;">Overhead Percent:</span>
<span id="t54" style="left:173.5px;top:299.19px;font:bold 9.7px/9.7px 'Liberation Sans',sans-serif;color:#0c0c0c;transform:scaleX(0.9114);-webkit-text-stroke:0.2px #0c0c0c;">7.50 %</span>
<span id="t55" style="left:56.5px;top:320.69px;font:bold 9.7px/9.7px 'Liberation Sans',sans-serif;color:#0c0c0c;transform:scaleX(0.9228);-webkit-text-stroke:0.2px #0c0c0c;">Account Purpose:</span>
<span id="t56" style="left:56.5px;top:363.69px;font:bold 9.7px/9.7px 'Liberation Sans',sans-serif;color:#0c0c0c;transform:scaleX(0.9179);-webkit-text-stroke:0.2px #0c0c0c;">Proposed Changes:</span>
<div style="left:176px;top:413.5px;width:31px;height:13.5px;background:#c2bfc3;box-shadow:inset 1px 1px 0 #9a989c,inset -1px -1px 0 #f6f4f6;"></div>
<div style="left:209px;top:413.5px;width:57px;height:13.5px;background:#c2bfc3;box-shadow:inset 1px 1px 0 #9a989c,inset -1px -1px 0 #f6f4f6;"></div>
<div style="left:268px;top:413.5px;width:123px;height:13.5px;background:#c2bfc3;box-shadow:inset 1px 1px 0 #9a989c,inset -1px -1px 0 #f6f4f6;"></div>
<div style="left:393px;top:413.5px;width:110px;height:13.5px;background:#c2bfc3;box-shadow:inset 1px 1px 0 #9a989c,inset -1px -1px 0 #f6f4f6;"></div>
<span id="t57" style="left:211.5px;top:415.77px;font:normal 9.6px/9.6px 'Liberation Sans',sans-serif;color:#1c1c1c;transform:scaleX(0.8549);-webkit-text-stroke:0.12px #1c1c1c;">HETRAIN</span>
<span id="t58" style="left:271px;top:415.77px;font:normal 9.6px/9.6px 'Liberation Sans',sans-serif;color:#1c1c1c;transform:scaleX(0.8801);-webkit-text-stroke:0.12px #1c1c1c;">IFR Account</span>
<span id="t59" style="left:396px;top:415.77px;font:normal 9.6px/9.6px 'Liberation Sans',sans-serif;color:#1c1c1c;transform:scaleX(0.8684);-webkit-text-stroke:0.12px #1c1c1c;">Update/Display</span>
<svg style="left:506px;top:415.5px;" width="11" height="11" viewBox="0 0 11 11"><path d="M10.5 1L1 10.5M10.5 4.5L4.5 10.5M10.5 8L8 10.5" stroke="#8e8c90"/><path d="M10.5 2L2 10.5M10.5 5.5L5.5 10.5M10.5 9L9 10.5" stroke="#fbfbfb"/></svg>
<div style="left:88.5px;top:444px;width:508px;height:39px;background:#c2bfc3;box-shadow:inset 1px 0 0 #d8d6d8,inset -1px -1px 0 #101010,inset 2px 0 0 #fff,inset -2px -2px 0 #808080;"></div>
<div style="left:91.5px;top:444px;width:502px;height:22px;background:#c2bfc3;box-shadow:inset 1px 0 0 #6a686c,inset -1px -1px 0 #fbfbfb;"></div>
<div style="left:252px;top:466.8px;width:31px;height:13.5px;background:#c2bfc3;box-shadow:inset 1px 1px 0 #9a989c,inset -1px -1px 0 #f6f4f6;"></div>
<div style="left:285px;top:466.8px;width:57px;height:13.5px;background:#c2bfc3;box-shadow:inset 1px 1px 0 #9a989c,inset -1px -1px 0 #f6f4f6;"></div>
<div style="left:344px;top:466.8px;width:123px;height:13.5px;background:#c2bfc3;box-shadow:inset 1px 1px 0 #9a989c,inset -1px -1px 0 #f6f4f6;"></div>
<div style="left:469px;top:466.8px;width:110px;height:13.5px;background:#c2bfc3;box-shadow:inset 1px 1px 0 #9a989c,inset -1px -1px 0 #f6f4f6;"></div>
<span id="t60" style="left:287.5px;top:469.07px;font:normal 9.6px/9.6px 'Liberation Sans',sans-serif;color:#1c1c1c;transform:scaleX(0.8549);-webkit-text-stroke:0.12px #1c1c1c;">HETRAIN</span>
<span id="t61" style="left:347px;top:469.07px;font:normal 9.6px/9.6px 'Liberation Sans',sans-serif;color:#1c1c1c;transform:scaleX(0.8801);-webkit-text-stroke:0.12px #1c1c1c;">IFR Account</span>
<span id="t62" style="left:472px;top:469.07px;font:normal 9.6px/9.6px 'Liberation Sans',sans-serif;color:#1c1c1c;transform:scaleX(0.8684);-webkit-text-stroke:0.12px #1c1c1c;">Update/Display</span>
<svg style="left:582px;top:468.8px;" width="11" height="11" viewBox="0 0 11 11"><path d="M10.5 1L1 10.5M10.5 4.5L4.5 10.5M10.5 8L8 10.5" stroke="#8e8c90"/><path d="M10.5 2L2 10.5M10.5 5.5L5.5 10.5M10.5 9L9 10.5" stroke="#fbfbfb"/></svg>
<svg style="left:296px;top:126px;" width="232" height="42" viewBox="0 0 232 42"><path d="M7 6.5L225.5 26.5V37Z" fill="#fff" stroke="#000" stroke-width="1.4" stroke-linejoin="miter"/></svg>
<div style="left:521px;top:147px;width:68px;height:39px;background:#fff;box-sizing:border-box;border:1px solid #000;"></div>
<div style="left:520px;top:153.3px;width:2px;height:9px;background:#fff;"></div>
<span id="t63" style="left:532px;top:153.61px;font:normal 13px/13px 'Liberation Serif',serif;color:#000;transform:scaleX(0.9731);-webkit-text-stroke:0.25px #000;">Back</span>
<span id="t64" style="left:532px;top:168.61px;font:normal 13px/13px 'Liberation Serif',serif;color:#000;transform:scaleX(1.0591);-webkit-text-stroke:0.25px #000;">button</span>
<div style="left:600px;top:201px;width:64.5px;height:38.5px;background:#fff;box-sizing:border-box;border:1px solid #000;border-left:none;"></div>
<span id="t65" style="left:608px;top:207.61px;font:normal 13px/13px 'Liberation Serif',serif;color:#000;transform:scaleX(0.9731);-webkit-text-stroke:0.25px #000;">Back</span>
<span id="t66" style="left:608px;top:222.61px;font:normal 13px/13px 'Liberation Serif',serif;color:#000;transform:scaleX(1.0531);-webkit-text-stroke:0.25px #000;">button</span>
<div style="left:785px;top:44px;width:15px;height:507px;background:#c0c0c0;"></div>
<div class="dith" style="left:785px;top:63px;width:14px;height:424px"></div>
<div style="left:799px;top:44px;width:1px;height:507px;background:#e4e4e4;"></div>
<div style="left:785px;top:45px;width:13px;height:5px;background:#c0c0c0;box-shadow:inset 1px 1px 0 #c0c0c0,inset -1px -1px 0 #000,inset 2px 2px 0 #fff,inset -2px -2px 0 #808080;"></div>
<div style="left:785px;top:50px;width:13px;height:13px;background:#c0c0c0;box-shadow:inset 1px 1px 0 #c0c0c0,inset -1px -1px 0 #000,inset 2px 2px 0 #fff,inset -2px -2px 0 #808080;"></div>
<svg style="left:788px;top:55px;" width="7" height="3" viewBox="0 0 7 3"><path d="M0.5 3L3.5 0L6.5 3Z" fill="#000"/></svg>
<div style="left:785px;top:251px;width:13px;height:6px;background:#c0c0c0;box-shadow:inset 1px 1px 0 #c0c0c0,inset -1px -1px 0 #000,inset 2px 2px 0 #fff,inset -2px -2px 0 #808080;"></div>
<div style="left:785px;top:487px;width:13px;height:11px;background:#c0c0c0;box-shadow:inset 1px 1px 0 #c0c0c0,inset -1px -1px 0 #000,inset 2px 2px 0 #fff,inset -2px -2px 0 #808080;"></div>
<svg style="left:788px;top:491px;" width="7" height="3" viewBox="0 0 7 3"><path d="M0.5 0L3.5 3L6.5 0Z" fill="#000"/></svg>
<div style="left:785px;top:498px;width:13px;height:1px;background:#fff;"></div>
<div style="left:785px;top:499px;width:13px;height:12px;background:#c0c0c0;box-shadow:inset 1px 1px 0 #c0c0c0,inset -1px -1px 0 #000,inset 2px 2px 0 #fff,inset -2px -2px 0 #808080;"></div>
<svg style="left:788px;top:502px;" width="7" height="7" viewBox="0 0 7 7"><path d="M1 3L3.5 0.5L6 3Z M1 6.5L3.5 4L6 6.5Z" fill="#000"/></svg>
<div style="left:785px;top:511px;width:13px;height:1px;background:#fff;"></div>
<div style="left:785px;top:512px;width:13px;height:12px;background:#c0c0c0;box-shadow:inset 1px 1px 0 #c0c0c0,inset -1px -1px 0 #000,inset 2px 2px 0 #fff,inset -2px -2px 0 #808080;"></div>
<svg style="left:788px;top:515px;" width="7" height="7" viewBox="0 0 7 7"><circle cx="3.5" cy="3.5" r="2.6" fill="#a0a0a0" stroke="#606060"/><path d="M2 2.5A2 2 0 0 1 5 2.5" stroke="#fff" fill="none"/></svg>
<div style="left:785px;top:524px;width:13px;height:1px;background:#fff;"></div>
<div style="left:785px;top:525px;width:13px;height:12px;background:#c0c0c0;box-shadow:inset 1px 1px 0 #c0c0c0,inset -1px -1px 0 #000,inset 2px 2px 0 #fff,inset -2px -2px 0 #808080;"></div>
<svg style="left:788px;top:528px;" width="7" height="7" viewBox="0 0 7 7"><path d="M1 0.5L3.5 3L6 0.5Z M1 4L3.5 6.5L6 4Z" fill="#000"/></svg>
<div style="left:2px;top:537px;width:798px;height:14px;background:#c0c0c0;"></div>
<div style="left:2px;top:537px;width:783px;height:1px;background:#fff;"></div>
<div class="dith" style="left:67px;top:538px;width:705px;height:13px"></div>
<div style="left:2px;top:538px;width:13px;height:13px;background:#c0c0c0;box-shadow:inset 1px 1px 0 #c0c0c0,inset -1px -1px 0 #000,inset 2px 2px 0 #fff,inset -2px -2px 0 #808080;"></div>
<div style="left:15px;top:538px;width:13px;height:13px;background:#c0c0c0;box-shadow:inset 1px 1px 0 #c0c0c0,inset -1px -1px 0 #000,inset 2px 2px 0 #fff,inset -2px -2px 0 #808080;"></div>
<div style="left:28px;top:538px;width:13px;height:13px;background:#d4d4d4;box-shadow:inset 1px 1px 0 #000,inset -1px -1px 0 #000,inset 2px 2px 0 #404040;"></div>
<div style="left:41px;top:538px;width:13px;height:13px;background:#c0c0c0;box-shadow:inset 1px 1px 0 #c0c0c0,inset -1px -1px 0 #000,inset 2px 2px 0 #fff,inset -2px -2px 0 #808080;"></div>
<div style="left:54px;top:538px;width:13px;height:13px;background:#c0c0c0;box-shadow:inset 1px 1px 0 #c0c0c0,inset -1px -1px 0 #000,inset 2px 2px 0 #fff,inset -2px -2px 0 #808080;"></div>
<svg style="left:6px;top:542px;" width="6" height="6" viewBox="0 0 6 6"><path d="M0 0.5H6M0 2.5H6M0 4.5H6" stroke="#000"/></svg>
<svg style="left:19px;top:541px;" width="6" height="7" viewBox="0 0 6 7"><path d="M0 5.5H6M2 1.5H6M2 3.5H6M2.5 0V5" stroke="#000"/></svg>
<svg style="left:33px;top:542px;" width="6" height="7" viewBox="0 0 6 7"><rect x="0" y="0" width="6" height="7" fill="#fff"/><path d="M1 1.5H6M0 3.5H6M0 5.5H6" stroke="#000"/></svg>
<svg style="left:46px;top:541px;" width="5" height="7" viewBox="0 0 5 7"><path d="M0 0.5H1.2M3.8 0.5H5M1 3.5H4M0 6.5H5" stroke="#000"/></svg>
<svg style="left:58px;top:541px;" width="4" height="7" viewBox="0 0 4 7"><path d="M4 0L0 3.5L4 7Z" fill="#000"/></svg>
<div style="left:143px;top:538px;width:623px;height:13px;background:#c0c0c0;box-shadow:inset 1px 1px 0 #c0c0c0,inset -1px -1px 0 #000,inset 2px 2px 0 #fff,inset -2px -2px 0 #808080;"></div>
<div style="left:772px;top:538px;width:13px;height:13px;background:#c0c0c0;box-shadow:inset 1px 1px 0 #c0c0c0,inset -1px -1px 0 #000,inset 2px 2px 0 #fff,inset -2px -2px 0 #808080;"></div>
<svg style="left:777px;top:541px;" width="4" height="7" viewBox="0 0 4 7"><path d="M0 0L4 3.5L0 7Z" fill="#000"/></svg>
<div style="left:785px;top:537px;width:15px;height:14px;background:#c0c0c0;"></div>
<div style="left:0px;top:551px;width:800px;height:1px;background:#c0c0c0;"></div>
<div style="left:0px;top:552px;width:800px;height:1px;background:#fff;"></div>
<div style="left:0px;top:553px;width:800px;height:20px;background:#c0c0c0;"></div>
<div style="left:5px;top:555px;width:181px;height:17px;background:#c0c0c0;box-shadow:inset 1px 1px 0 #808080,inset -1px -1px 0 #fff;"></div>
<div style="left:192px;top:555px;width:158px;height:17px;background:#c0c0c0;box-shadow:inset 1px 1px 0 #808080,inset -1px -1px 0 #fff;"></div>
<div style="left:356px;top:555px;width:27px;height:17px;background:#c0c0c0;box-shadow:inset 1px 1px 0 #808080,inset -1px -1px 0 #fff;"></div>
<div style="left:388px;top:555px;width:25px;height:17px;background:#c0c0c0;box-shadow:inset 1px 1px 0 #808080,inset -1px -1px 0 #fff;"></div>
<div style="left:417px;top:555px;width:24px;height:17px;background:#c0c0c0;box-shadow:inset 1px 1px 0 #808080,inset -1px -1px 0 #fff;"></div>
<div style="left:447px;top:555px;width:26px;height:17px;background:#c0c0c0;box-shadow:inset 1px 1px 0 #808080,inset -1px -1px 0 #fff;"></div>
<div style="left:478px;top:555px;width:27px;height:17px;background:#c0c0c0;box-shadow:inset 1px 1px 0 #808080,inset -1px -1px 0 #fff;"></div>
<div style="left:511px;top:555px;width:44px;height:17px;background:#c0c0c0;box-shadow:inset 1px 1px 0 #808080,inset -1px -1px 0 #fff;"></div>
<div style="left:560px;top:555px;width:35px;height:17px;background:#c0c0c0;box-shadow:inset 1px 1px 0 #808080,inset -1px -1px 0 #fff;"></div>
<span id="t67" style="left:10.5px;top:557.48px;font:normal 11.6px/11.6px 'Liberation Sans',sans-serif;color:#000;transform:scaleX(0.8940);-webkit-text-stroke:0.3px #000;">Page&nbsp; 57</span>
<span id="t68" style="left:72.5px;top:557.48px;font:normal 11.6px/11.6px 'Liberation Sans',sans-serif;color:#000;transform:scaleX(0.8669);-webkit-text-stroke:0.3px #000;">Sec&nbsp; 2</span>
<span id="t69" style="left:141.5px;top:557.48px;font:normal 11.6px/11.6px 'Liberation Sans',sans-serif;color:#000;transform:scaleX(0.9586);-webkit-text-stroke:0.3px #000;">57/126</span>
<span id="t70" style="left:196.5px;top:557.48px;font:normal 11.6px/11.6px 'Liberation Sans',sans-serif;color:#000;transform:scaleX(0.8205);-webkit-text-stroke:0.3px #000;">At</span>
<span id="t71" style="left:255.5px;top:557.48px;font:normal 11.6px/11.6px 'Liberation Sans',sans-serif;color:#000;transform:scaleX(0.8136);-webkit-text-stroke:0.3px #000;">Ln</span>
<span id="t72" style="left:298.5px;top:557.48px;font:normal 11.6px/11.6px 'Liberation Sans',sans-serif;color:#000;transform:scaleX(0.8905);-webkit-text-stroke:0.3px #000;">Col</span>
<span id="t73" style="left:360px;top:557.48px;font:normal 11.6px/11.6px 'Liberation Sans',sans-serif;color:#808080;transform:scaleX(0.7760);-webkit-text-stroke:0.3px #808080;text-shadow:1px 1px 0 #fff;">REC</span>
<span id="t74" style="left:391.5px;top:557.48px;font:normal 11.6px/11.6px 'Liberation Sans',sans-serif;color:#808080;transform:scaleX(0.7978);-webkit-text-stroke:0.3px #808080;text-shadow:1px 1px 0 #fff;">TRK</span>
<span id="t75" style="left:420px;top:557.48px;font:normal 11.6px/11.6px 'Liberation Sans',sans-serif;color:#808080;transform:scaleX(0.7978);-webkit-text-stroke:0.3px #808080;text-shadow:1px 1px 0 #fff;">EXT</span>
<span id="t76" style="left:450px;top:557.48px;font:normal 11.6px/11.6px 'Liberation Sans',sans-serif;color:#808080;transform:scaleX(0.7761);-webkit-text-stroke:0.3px #808080;text-shadow:1px 1px 0 #fff;">OVR</span>
<span id="t77" style="left:481px;top:557.48px;font:normal 11.6px/11.6px 'Liberation Sans',sans-serif;color:#808080;transform:scaleX(0.8129);-webkit-text-stroke:0.3px #808080;text-shadow:1px 1px 0 #fff;">WPH</span>
<div style="left:0px;top:573px;width:800px;height:1px;background:#fff;"></div>
<div style="left:0px;top:574px;width:800px;height:26px;background:#c0c0c0;"></div>
<div style="left:2px;top:575.5px;width:54px;height:22.5px;background:#c0c0c0;box-shadow:inset 1px 1px 0 #fff,inset -1px -1px 0 #000,inset 2px 2px 0 #dfdfdf,inset -2px -2px 0 #808080;"></div>
<svg style="left:5px;top:579px;" width="19" height="16" viewBox="0 0 19 16"><path d="M7.6 3C8.8 0.8 10.6 0.4 12 1.4C13.4 0.4 15 0.8 16.8 3V14.8C15.4 13.6 13.6 13.6 12.4 14.8C11.2 13.6 9.2 13.6 7.6 15Z" fill="#000"/><path d="M9 3.6C9.8 3.1 10.5 3.1 11.1 3.5V6.9C10.4 6.6 9.7 6.7 9 7.1Z" fill="#f00808"/><path d="M13 3C13.7 2.7 14.4 2.9 15 3.4V6.6C14.4 6.2 13.7 6.1 13 6.4Z" fill="#08d808"/><path d="M9 8.5C9.8 8.1 10.5 8.1 11.1 8.4V11.8C10.4 11.5 9.7 11.6 9 12Z" fill="#0808f0"/><path d="M13 8C13.7 7.8 14.4 8 15.1 8.4V11.8C14.4 11.4 13.7 11.3 13 11.5Z" fill="#f0e808"/><path d="M1 3H2.2M4 3H7" stroke="#000" stroke-width="1.2"/><path d="M1 6.2H2.2M3.4 6.2H7.4" stroke="#f00808" stroke-width="1.6"/><path d="M1 10.2H2.2M3.4 10.2H7.4" stroke="#0808f0" stroke-width="1.6"/><path d="M1 13.8H2.2M4 13.8H7" stroke="#000" stroke-width="1.2"/></svg>
<span id="t78" style="left:24.5px;top:580.34px;font:bold 12px/12px 'Liberation Sans',sans-serif;color:#000;transform:scaleX(0.9691);-webkit-text-stroke:0.3px #000;">Start</span>
<div style="left:60px;top:576px;width:159px;height:22px;background:#c0c0c0;box-shadow:inset 1px 1px 0 #fff,inset -1px -1px 0 #000,inset 2px 2px 0 #dfdfdf,inset -2px -2px 0 #808080;"></div>
<svg style="left:63.5px;top:579px;" width="16" height="16" viewBox="0 0 16 16"><path d="M1.5 13.5V2.8L3 1.5H6.5L8 3.5H13.5L14.5 4.5V13.5Z" fill="#f4e48c" stroke="#786818"/><path d="M2.5 5H13.5" stroke="#fff8c8"/><circle cx="5.8" cy="6.6" r="3.1" fill="#9cf0f0" stroke="#202020" stroke-width="1.3"/><path d="M8.2 9.2L13.2 14.2" stroke="#101010" stroke-width="3"/><path d="M8.6 9.6L13 14" stroke="#1070f0" stroke-width="1.6"/></svg>
<span id="t79" style="left:81.2px;top:580.34px;font:normal 12px/12px 'Liberation Sans',sans-serif;color:#000;transform:scaleX(0.8820);-webkit-text-stroke:0.3px #000;">Exploring - Start Menu</span>
<div style="left:223px;top:576px;width:159px;height:22px;background:#c0c0c0;box-shadow:inset 1px 1px 0 #fff,inset -1px -1px 0 #000,inset 2px 2px 0 #dfdfdf,inset -2px -2px 0 #808080;"></div>
<svg style="left:226.5px;top:579px;" width="16" height="16" viewBox="0 0 16 16"><path d="M1.5 13.5V2.8L3 1.5H6.5L8 3.5H13.5L14.5 4.5V13.5Z" fill="#f4e48c" stroke="#786818"/><path d="M2.5 5H13.5" stroke="#fff8c8"/><circle cx="5.8" cy="6.6" r="3.1" fill="#9cf0f0" stroke="#202020" stroke-width="1.3"/><path d="M8.2 9.2L13.2 14.2" stroke="#101010" stroke-width="3"/><path d="M8.6 9.6L13 14" stroke="#1070f0" stroke-width="1.6"/></svg>
<span id="t80" style="left:244.7px;top:580.34px;font:normal 12px/12px 'Liberation Sans',sans-serif;color:#000;transform:scaleX(0.8974);-webkit-text-stroke:0.3px #000;">Exploring - Budget Web P...</span>
<div style="left:386px;top:576px;width:159px;height:22px;background:#fff;box-shadow:inset 1px 1px 0 #000,inset -1px -1px 0 #fff,inset 2px 2px 0 #808080,inset -2px -2px 0 #dfdfdf;"></div>
<div class="dith" style="left:388px;top:578px;width:155px;height:18px"></div>
<span id="t81" style="left:390px;top:580.88px;font:italic bold 15.5px/15.5px 'Liberation Sans',sans-serif;color:#00e8e8;transform:scaleX(1.0245);-webkit-text-stroke:0.3px #00e8e8;-webkit-text-stroke:0.9px #00e8e8;text-shadow:1px 0 0 #000,0 1px 0 #000,-1px 0 0 #000,0 -1px 0 #000,1px 1px 0 #000;">W</span>
<span id="t82" style="left:408.5px;top:581.34px;font:bold 12px/12px 'Liberation Sans',sans-serif;color:#000;transform:scaleX(1.0004);-webkit-text-stroke:0.3px #000;">Microsoft Word - Man...</span>
<div style="left:683px;top:577px;width:115px;height:20px;background:#c0c0c0;box-shadow:inset 1px 1px 0 #808080,inset -1px -1px 0 #fff;"></div>
<svg style="left:686px;top:579px;" width="17" height="17" viewBox="0 0 17 17"><circle cx="8" cy="8.5" r="7.2" fill="#e4e4e4" stroke="#101010" stroke-width="1.5"/><path d="M9 2L11 2.5L7 10L6 9Z" fill="#fff"/><path d="M2.5 13.5L4 10L3.2 10L5 6.5L7 10L6.2 10L7.8 13.5Z M8.2 13.5L9.8 10L9 10L11 5.5L13 10L12.2 10L13.8 13.5Z" fill="#086008"/></svg>
<svg style="left:703px;top:580px;" width="17" height="16" viewBox="0 0 17 16"><ellipse cx="8" cy="7" rx="7.5" ry="5.5" fill="#0000f0"/><path d="M5 11L6 15L10 11Z" fill="#0000f0"/><path d="M7 4L11 7L7 10Z" fill="#fff"/><path d="M3 7H6" stroke="#fff" stroke-width="2"/></svg>
<svg style="left:721px;top:579px;" width="14" height="17" viewBox="0 0 14 17"><path d="M1.5 3.5L4 2L7 4L12.5 1.5V11L9 15.5L4 14L1.5 9Z" fill="#f0f0f0" stroke="#000"/><circle cx="7.5" cy="8" r="2.5" fill="none" stroke="#000"/><path d="M7.5 6.5V8.2H9" stroke="#000" fill="none"/></svg>
<span id="t83" style="left:747.5px;top:580.84px;font:normal 12px/12px 'Liberation Sans',sans-serif;color:#000;transform:scaleX(0.8744);-webkit-text-stroke:0.3px #000;">8:51 AM</span>
</div></body></html>
